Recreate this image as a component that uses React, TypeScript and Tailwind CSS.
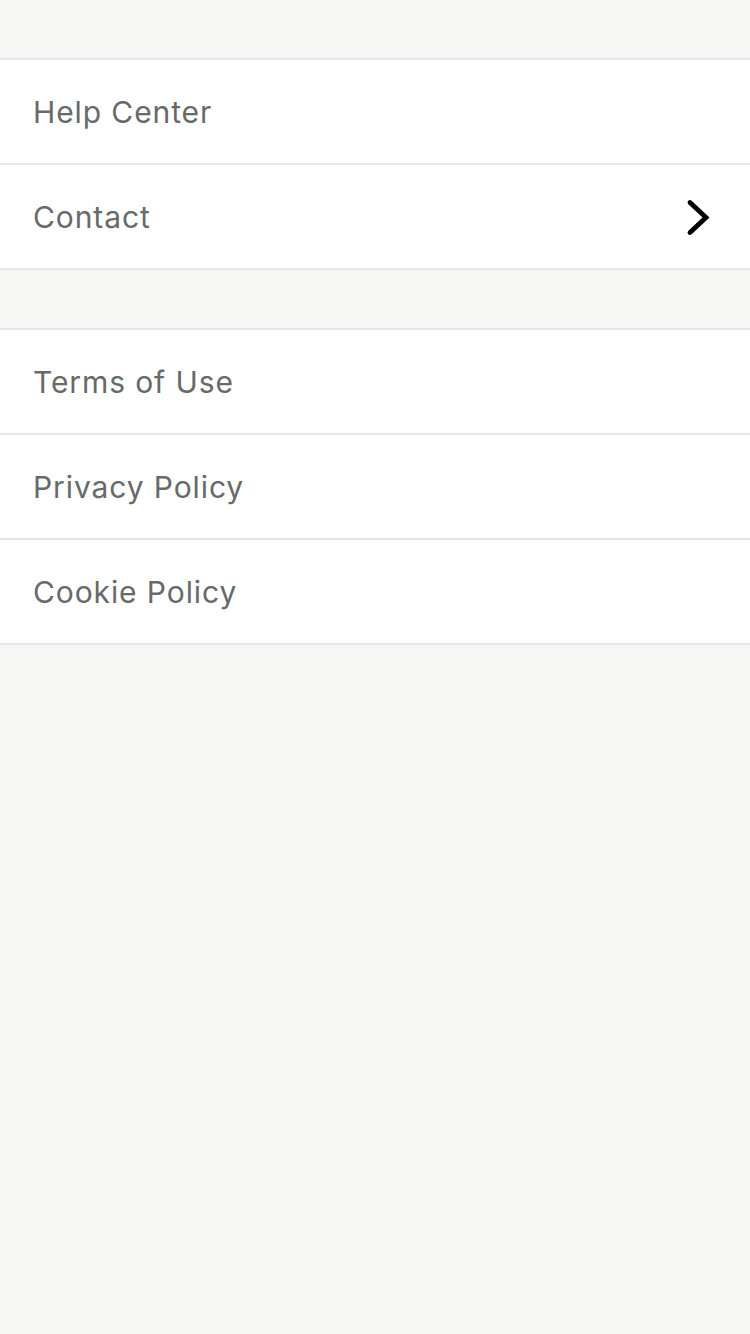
interface Row {
    label: string
    arrow?: boolean
}

const groups: Row[][] = [
    [{ label: 'Help Center' }, { label: 'Contact', arrow: true }],
    [{ label: 'Terms of Use' }, { label: 'Privacy Policy' }, { label: 'Cookie Policy' }],
]

function Chevron() {
    return (
        <svg width="26" height="40" viewBox="0 0 26 40" fill="none" className="text-black">
            <polyline
                points="5,5.5 21,20.5 5,35.5"
                stroke="currentColor"
                strokeWidth="4.8"
                strokeLinecap="round"
                strokeLinejoin="miter"
            />
        </svg>
    )
}

export default function App() {
    return (
        <div className="min-h-[1334px] w-[750px] bg-[#f6f6f4] pt-[58px] font-['Inter','Noto_Sans',sans-serif]">
            {groups.map((rows, gi) => (
                <div key={gi} className="mb-[58px] border-t-2 border-[#e6e6e6] bg-white">
                    {rows.map(row => (
                        <div
                            key={row.label}
                            className="flex h-[105px] items-center justify-between border-b-2 border-[#e6e6e6] pl-[33px] pr-[39px]"
                        >
                            <span className="pt-[2px] text-[30px] tracking-[0.9px] text-[#666a69]">{row.label}</span>
                            {row.arrow && <Chevron />}
                        </div>
                    ))}
                </div>
            ))}
        </div>
    )
}
